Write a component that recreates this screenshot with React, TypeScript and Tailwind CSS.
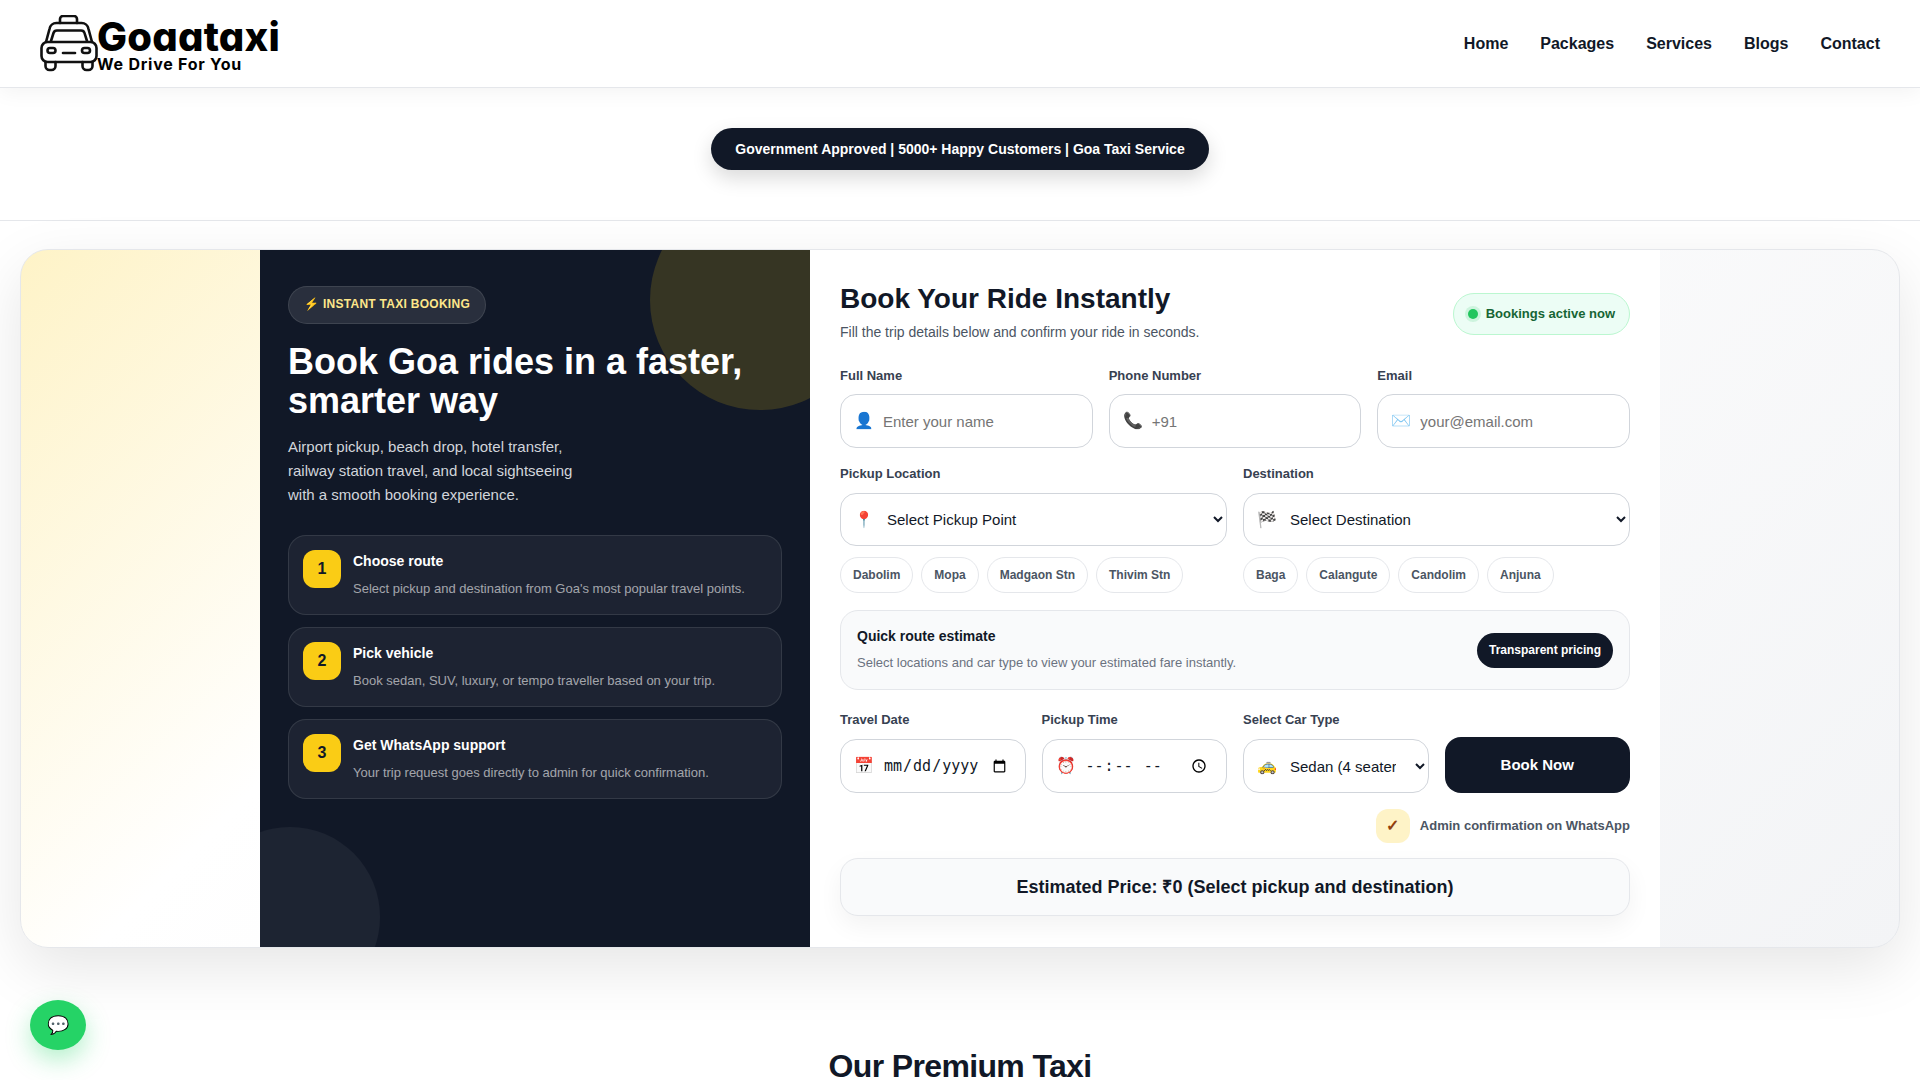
import React from "react";

const boxBase =
  "w-full rounded-2xl border-[1.5px] border-[#d1d5db] bg-white pl-[42px] pr-4 text-[15px] text-[#111827] outline-none placeholder:text-[#757575]";
const inputBox = boxBase + " h-[54px]";
const selectBox = boxBase + " h-[53px]";

function Field({
  label,
  icon,
  children,
  gapClass = "mb-[11px]",
  iconClass = "h-[54px]",
}: {
  label: string;
  icon: string;
  children: React.ReactNode;
  gapClass?: string;
  iconClass?: string;
}) {
  return (
    <div className="min-w-0">
      <label className={gapClass + " block h-[15px] leading-[15px] text-[13px] font-bold text-[#374151]"}>{label}</label>
      <div className="relative">
        <span className={iconClass + " absolute left-[14px] top-0 flex items-center text-[16px] pointer-events-none"}>{icon}</span>
        {children}
      </div>
    </div>
  );
}

function Chip({ children }: { children: React.ReactNode }) {
  return (
    <span className="h-9 px-3 rounded-full border border-[#e5e7eb] bg-white flex items-center text-xs font-bold text-[#4b5563]">
      {children}
    </span>
  );
}

function Step({ n, title, desc }: { n: number; title: string; desc: string }) {
  return (
    <div className="h-20 rounded-[18px] border border-white/10 bg-white/5 px-[14px] pt-[14px] flex gap-3">
      <div className="w-[38px] h-[38px] shrink-0 rounded-xl bg-[#facc15] flex items-center justify-center text-base font-bold text-[#111827]">
        {n}
      </div>
      <div>
        <div className="text-sm leading-4 font-bold text-white mt-[3px]">{title}</div>
        <div className="text-[13px] leading-5 text-white/60 mt-[10px]">{desc}</div>
      </div>
    </div>
  );
}

function Logo() {
  return (
    <div className="flex items-start h-[58px]">
      <svg width="58" height="57" viewBox="0 0 58 57" fill="none" stroke="#111" strokeWidth="2.6" strokeLinecap="round" strokeLinejoin="round" className="shrink-0">
        <path d="M20 8V4a3 3 0 0 1 3-3h11a3 3 0 0 1 3 3v4" />
        <path d="M6 27l3.5-13a7 7 0 0 1 7-6h25a7 7 0 0 1 7 6L52 27" />
        <path d="M11 26l2.5-8a3.5 3.5 0 0 1 3.5-2.500h24a3.500 3.500 0 0 1 3.500 2.500L47 26" />
        <rect x="1.500" y="27" width="55" height="20" rx="6" />
        <rect x="7.500" y="33" width="8" height="5" rx="2.500" />
        <rect x="42" y="33" width="8" height="5" rx="2.500" />
        <path d="M23 38h12" />
        <path d="M5.500 47v4a4 4 0 0 0 4 4h2a4 4 0 0 0 4-4v-4" />
        <path d="M42.500 47v4a4 4 0 0 0 4 4h2a4 4 0 0 0 4-4v-4" />
      </svg>
      <div className="-ml-px">
        <div className="text-[40px] leading-[40px] mt-[2px] font-extrabold tracking-[0.2px] text-black [font-family:Inter,sans-serif] [font-feature-settings:'cv11']">
          Goaataxi
        </div>
        <div className="text-[16px] leading-[15px] font-bold tracking-[0.75px] text-black [font-family:Inter,sans-serif] [font-feature-settings:'cv11']">
          We Drive For You
        </div>
      </div>
    </div>
  );
}

export default function App() {
  return (
    <div className="relative h-[1080px] overflow-hidden bg-white text-[#111827] [font-family:'Liberation_Sans',Arial,sans-serif]">
      <nav className="relative z-10 h-[88px] bg-white border-b border-[#e5e7eb] shadow-[0_4px_20px_rgba(0,0,0,0.05)] px-10 flex items-center justify-between">
        <Logo />
        <div className="flex gap-8 text-base font-bold text-[#111827]">
          <a>Home</a>
          <a>Packages</a>
          <a>Services</a>
          <a>Blogs</a>
          <a>Contact</a>
        </div>
      </nav>

      <div className="h-[133px] pt-10 flex justify-center border-b border-[#e5e7eb]">
        <div className="h-[42px] px-6 rounded-full bg-[#111827] text-white text-sm font-bold flex items-center shadow-[0_8px_20px_rgba(0,0,0,0.15)]">
          Government Approved | 5000+ Happy Customers | Goa Taxi Service
        </div>
      </div>

      <section className="px-5 pt-[28px]">
        <div className="h-[699px] rounded-[28px] border border-[#e5e7eb] overflow-hidden bg-[linear-gradient(135deg,#fef3c7_0%,#ffffff_30%,#f3f4f6_100%)] shadow-[0_20px_60px_rgba(0,0,0,0.1)] flex justify-center">
          <div className="w-[1400px] flex">
            <aside className="relative w-[550px] overflow-hidden bg-[#111827] px-7 pt-9 text-white">
              <div className="absolute w-[220px] h-[220px] rounded-full -top-[60px] -right-[60px] bg-[#facc15]/[0.16]" />
              <div className="absolute w-[180px] h-[180px] rounded-full -bottom-[60px] -left-[60px] bg-white/[0.05]" />
              <div className="relative">
                <div className="inline-flex items-center h-[38px] pb-[2px] px-[15px] rounded-full border border-white/10 bg-white/10 text-xs font-bold tracking-[0.28px] text-[#fde68a]">
                  ⚡ INSTANT TAXI BOOKING
                </div>
                <h1 className="mt-[18px] text-[36px] leading-[39px] font-bold text-white">
                  Book Goa rides in a faster,
                  <br />
                  smarter way
                </h1>
                <p className="mt-[15px] text-[15px] leading-6 text-[#d1d5db]">
                  Airport pickup, beach drop, hotel transfer,
                  <br />
                  railway station travel, and local sightseeing
                  <br />
                  with a smooth booking experience.
                </p>
                <div className="mt-7 flex flex-col gap-3">
                  <Step n={1} title="Choose route" desc="Select pickup and destination from Goa's most popular travel points." />
                  <Step n={2} title="Pick vehicle" desc="Book sedan, SUV, luxury, or tempo traveller based on your trip." />
                  <Step n={3} title="Get WhatsApp support" desc="Your trip request goes directly to admin for quick confirmation." />
                </div>
              </div>
            </aside>

            <main className="w-[850px] bg-white px-[30px] pt-[30px]">
              <div className="flex justify-between items-center h-[62px] mb-[26px]">
                <div>
                  <h2 className="mt-px text-[28px] leading-9 font-bold text-[#111827]">Book Your Ride Instantly</h2>
                  <p className="mt-[5px] text-sm leading-5 text-[#4b5563]">Fill the trip details below and confirm your ride in seconds.</p>
                </div>
                <div className="mt-[6px] h-[42px] px-[14px] rounded-full border border-[#bbf7d0] bg-[#ecfdf5] flex items-center gap-2 text-[13px] font-bold text-[#166534]">
                  <span className="w-[10px] h-[10px] rounded-full bg-[#22c55e] shadow-[0_0_0_3px_rgba(34,197,94,0.15)]" />
                  Bookings active now
                </div>
              </div>

              <div className="grid grid-cols-3 gap-4">
                <Field label="Full Name" icon="👤">
                  <input className={inputBox} placeholder="Enter your name" />
                </Field>
                <Field label="Phone Number" icon="📞">
                  <input className={inputBox} placeholder="+91" />
                </Field>
                <Field label="Email" icon="✉️">
                  <input className={inputBox} placeholder="your@email.com" />
                </Field>
              </div>

              <div className="grid grid-cols-2 gap-4 mt-[18px]">
                <div>
                  <Field gapClass="mb-[12px]" iconClass="h-[53px]" label="Pickup Location" icon="📍">
                    <select className={selectBox}>
                      <option>Select Pickup Point</option>
                    </select>
                  </Field>
                  <div className="flex gap-2 mt-[11px]">
                    <Chip>Dabolim</Chip>
                    <Chip>Mopa</Chip>
                    <Chip>Madgaon Stn</Chip>
                    <Chip>Thivim Stn</Chip>
                  </div>
                </div>
                <div>
                  <Field gapClass="mb-[12px]" iconClass="h-[53px]" label="Destination" icon="🏁">
                    <select className={selectBox}>
                      <option>Select Destination</option>
                    </select>
                  </Field>
                  <div className="flex gap-2 mt-[11px]">
                    <Chip>Baga</Chip>
                    <Chip>Calangute</Chip>
                    <Chip>Candolim</Chip>
                    <Chip>Anjuna</Chip>
                  </div>
                </div>
              </div>

              <div className="mt-[17px] h-20 rounded-[18px] border border-[#e5e7eb] bg-[#f9fafb] pl-4 pr-4 flex items-center justify-between">
                <div>
                  <div className="text-sm leading-4 font-bold text-[#111827]">Quick route estimate</div>
                  <div className="mt-[9px] text-[13px] leading-5 text-[#6b7280]">Select locations and car type to view your estimated fare instantly.</div>
                </div>
                <div className="h-[35px] px-3 rounded-full bg-[#111827] text-white text-xs font-bold flex items-center">Transparent pricing</div>
              </div>

              <div className="grid grid-cols-4 gap-4 mt-[22px] items-end">
                <Field gapClass="mb-[12px]" label="Travel Date" icon="📅">
                  <input type="date" className={inputBox + " [font-family:monospace]"} />
                </Field>
                <Field gapClass="mb-[12px]" label="Pickup Time" icon="⏰">
                  <input type="time" className={inputBox + " [font-family:monospace]"} />
                </Field>
                <Field gapClass="mb-[12px]" label="Select Car Type" icon="🚕">
                  <select className={inputBox}>
                    <option>Sedan (4 seater)</option>
                  </select>
                </Field>
                <button className="h-14 rounded-2xl bg-[#111827] text-white text-[15px] font-bold">Book Now</button>
              </div>

              <div className="mt-4 flex items-center justify-end gap-[10px]">
                <span className="w-[34px] h-[34px] rounded-xl bg-[#fef3c7] flex items-center justify-center text-base font-bold text-[#92400e]">✓</span>
                <span className="text-[13px] font-bold text-[#4b5563]">Admin confirmation on WhatsApp</span>
              </div>

              <div className="mt-[15px] h-[58px] rounded-[18px] border border-[#e5e7eb] bg-[#f9fafb] flex items-center justify-center text-lg font-bold text-[#111827] shadow-[0_10px_25px_rgba(0,0,0,0.05)]">
                Estimated Price: ₹0 (Select pickup and destination)
              </div>
            </main>
          </div>
        </div>
      </section>

      <h2 className="mt-[98px] text-center text-[32px] leading-10 font-bold tracking-[-0.64px] text-[#111827]">Our Premium Taxi</h2>

      <a className="fixed left-[30px] bottom-[30px] w-14 h-[50px] rounded-[50%] bg-[#25d366] flex items-center justify-center text-lg shadow-[0_10px_25px_rgba(37,211,102,0.35)]">
        💬
      </a>
    </div>
  );
}
